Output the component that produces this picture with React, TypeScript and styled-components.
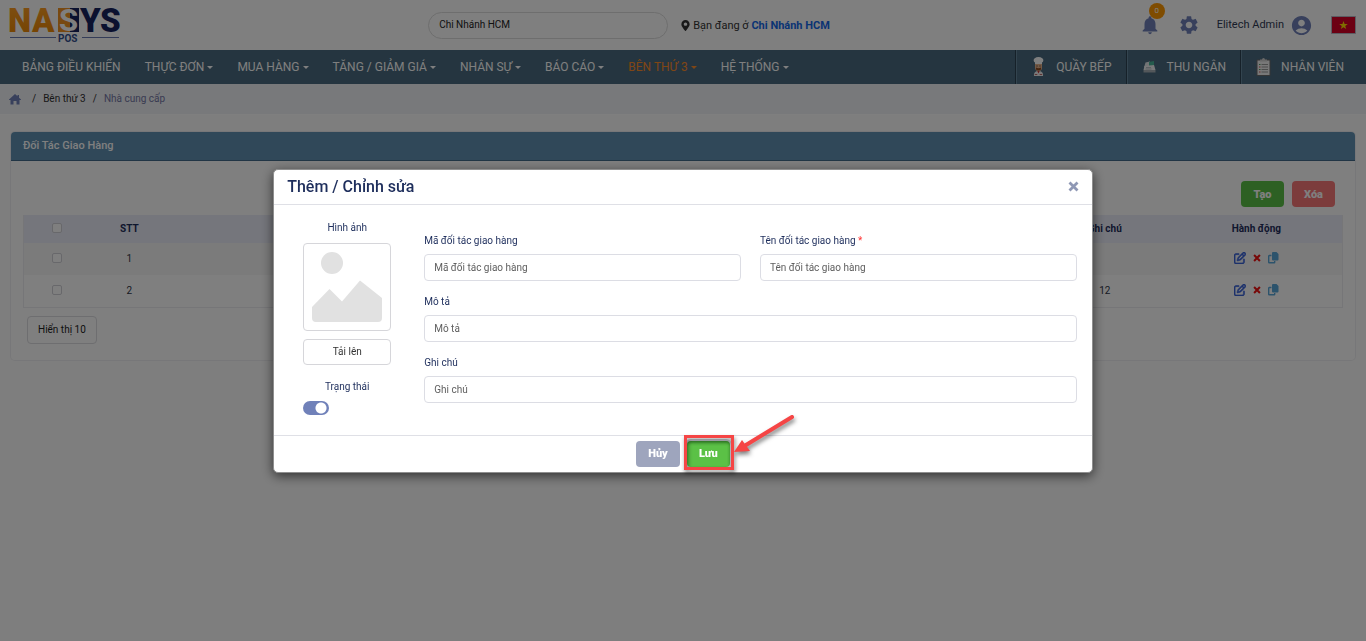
import React from 'react';
import styled, { createGlobalStyle } from 'styled-components';
import { MdNotifications, MdSettings, MdAccountCircle } from 'react-icons/md';
import { FaMapMarkerAlt } from 'react-icons/fa';
import { FaRegPenToSquare } from 'react-icons/fa6';

const GlobalStyle = createGlobalStyle`
  *, *::before, *::after { box-sizing: border-box; }
  html { height: 100%; }
  body {
    margin: 0;
    min-height: 100%;
    background: #fcfcfc;
    color: #1e2e5c;
    font: 400 10px/16px Roboto, "Noto Sans", sans-serif;
  }
  button, input, select { font: inherit; color: inherit; margin: 0; }
  a { color: inherit; text-decoration: none; }
  svg { display: block; flex: none; }
`;

/* ---------- top bar ---------- */
const TopBar = styled.header`
  display: grid;
  grid-template-columns: 31% 1fr auto;
  align-items: center;
  height: 50px;
  padding: 0 10px 0 7px;
  background: #fff;
`;
const BranchArea = styled.div`
  display: flex;
  align-items: center;
  gap: 12px;
  padding-left: 3px;
`;
const BranchSelect = styled.select`
  appearance: none;
  width: 240px;
  height: 27px;
  padding: 0 10px;
  border: 1px solid #dcdcdc;
  border-radius: 14px;
  background: #fff;
  color: #222;
`;
const Location = styled.p`
  display: flex;
  align-items: center;
  gap: 2px;
  margin: 0;
  padding-top: 1px;
  font-size: 11px;
  color: #333;
`;
const BranchLink = styled.a`
  font-weight: 700;
  color: #1468e8;
`;
const UserArea = styled.div`
  display: flex;
  align-items: center;
  color: #7081b9;
`;
const IconButton = styled.button`
  position: relative;
  display: flex;
  padding: 0;
  border: 0;
  background: none;
  margin-right: 17px;
`;
const Badge = styled.span`
  position: absolute;
  top: -11px;
  right: -4px;
  width: 16px;
  height: 16px;
  border-radius: 8px;
  background: #ff9800;
  color: #fff;
  font-size: 8px;
  text-align: center;
`;
const Account = styled.button`
  display: flex;
  align-items: center;
  gap: 6px;
  padding: 0;
  border: 0;
  background: none;
  font-size: 11px;
  color: #7081b9;
  margin-right: 18px;
`;
const AccountName = styled.span`
  color: #303a55;
`;

/* ---------- navigation ---------- */
const NavBar = styled.nav`
  display: flex;
  justify-content: space-between;
  height: 34px;
  padding-left: 10px;
  background: #4a6b80;
  color: #fff;
  font-size: 12px;
`;
const NavGroup = styled.div`
  display: flex;
`;
const NavItem = styled.a<{ $active?: boolean }>`
  display: flex;
  align-items: center;
  gap: 3px;
  padding: 0 12px;
  white-space: nowrap;
  color: ${(p) => (p.$active ? '#ff8c2a' : '#fff')};
`;
const Caret = styled.span`
  border: 3px solid transparent;
  border-top-color: currentColor;
  border-bottom: 0;
`;
const StationLink = styled.a`
  display: flex;
  align-items: center;
  gap: 10px;
  padding: 0 14px 0 15px;
  border-left: 1px solid #2d4352;
  box-shadow: inset 1px 0 #66899f;
  white-space: nowrap;
  &:last-child { padding-right: 22px; }
`;

/* ---------- breadcrumb ---------- */
const Crumbs = styled.nav`
  display: flex;
  align-items: center;
  gap: 7px;
  height: 31px;
  padding: 0 9px;
  background: #f1f2f6;
  border-bottom: 1px solid #fff;
  color: #303030;
`;
const HomeLink = styled.a`
  margin-right: 4px;
  color: #7081b9;
`;
const CrumbCurrent = styled.span`
  color: #7377a5;
`;

/* ---------- card ---------- */
const Card = styled.section`
  margin: 17px 11px 0;
  border-radius: 4px;
  background: #fff;
  box-shadow: 0 0 0 1px #efeff2;
`;
const CardTitle = styled.h1`
  margin: 0;
  height: 29px;
  padding: 0 12px;
  background: #6090b2;
  border-bottom: 1px solid #426b8a;
  border-radius: 4px 4px 0 0;
  color: #fff;
  font-size: 11px;
  line-height: 28px;
  font-weight: 500;
`;
const CardBody = styled.div`
  padding: 20px 12px 16px;
`;
const Toolbar = styled.div`
  display: flex;
  justify-content: flex-end;
  gap: 8px;
  padding: 0 8px 8px 0;
`;
const Button = styled.button<{ $tone: string; $pressed?: boolean }>`
  min-width: 43px;
  height: 26px;
  padding: 1px 12px 0;
  border: 0;
  border-radius: 4px;
  background: ${(p) => p.$tone};
  color: #fff;
  font-size: 11px;
  font-weight: 900;
  box-shadow: ${(p) => (p.$pressed ? 'inset 0 2px 3px rgba(0, 60, 0, 0.35), 0 0 0 2px #c9cbd3' : 'none')};
`;
const Table = styled.table`
  width: 100%;
  border-collapse: separate;
  border-spacing: 0;
  table-layout: fixed;
  border: 1px solid #ececf0;
  border-top: 0;
  text-align: center;
  color: #303648;
`;
const HeadCell = styled.th<{ $w?: string }>`
  width: ${(p) => p.$w || 'auto'};
  height: 28px;
  padding: 0;
  background: #ebedf8;
  color: #1e2e5c;
  font-weight: 700;
`;
const Row = styled.tr`
  &:nth-child(odd) { background: #f7f7f7; }
`;
const Cell = styled.td`
  height: 32px;
  padding: 0;
`;
const Check = styled.input`
  appearance: none;
  display: block;
  width: 10px;
  height: 10px;
  margin: 0 auto 2px;
  border: 1px solid #d0d0d6;
  border-radius: 2px;
  background: #fff;
`;
const Actions = styled.div`
  display: flex;
  justify-content: center;
  align-items: center;
  gap: 7px;
  padding-bottom: 2px;
`;
const ActionButton = styled.button<{ $tone: string }>`
  display: flex;
  padding: 0;
  border: 0;
  background: none;
  color: ${(p) => p.$tone};
`;
const PageSize = styled.button`
  height: 28px;
  margin: 8px 0 0 4px;
  padding: 0 10px;
  border: 1px solid #dcdce0;
  border-radius: 4px;
  background: #fff;
  color: #222;
`;

/* ---------- modal ---------- */
const Backdrop = styled.div`
  position: fixed;
  inset: 0;
  display: flex;
  align-items: center;
  justify-content: center;
  background: rgba(0, 0, 0, 0.5);
`;
const Modal = styled.div`
  width: 60%;
  min-width: 560px;
  border: 1px solid #8f8f8f;
  border-radius: 5px;
  background: #fff;
  box-shadow: 0 3px 12px rgba(0, 0, 0, 0.6);
`;
const ModalHead = styled.div`
  display: flex;
  align-items: center;
  justify-content: space-between;
  height: 35px;
  padding: 0 13px;
  border-bottom: 1px solid #dfe0e6;
`;
const ModalTitle = styled.h2`
  margin: 0;
  font-size: 16px;
  line-height: 20px;
  font-weight: 500;
`;
const CloseButton = styled.button`
  display: flex;
  padding: 0;
  border: 0;
  background: none;
  color: #8f98b5;
`;
const ModalBody = styled.div`
  display: flex;
  gap: 33px;
  padding: 15px 15px 20px 29px;
`;
const MediaColumn = styled.div`
  display: flex;
  flex-direction: column;
  width: 88px;
`;
const MediaLabel = styled.label`
  text-align: center;
`;
const Preview = styled.div`
  display: flex;
  align-items: center;
  justify-content: center;
  height: 88px;
  margin: 7px 0 8px;
  border: 1px solid #d6d6da;
  border-radius: 4px;
`;
const UploadButton = styled.button`
  height: 26px;
  margin-bottom: 14px;
  border: 1px solid #d6d6da;
  border-radius: 4px;
  background: #fff;
  color: #333;
`;
const Switch = styled.input`
  appearance: none;
  width: 26px;
  height: 14px;
  margin-top: 6px;
  border-radius: 7px;
  background: radial-gradient(circle at 18px 7px, #fff 5px, #7081b9 6px);
`;
const Fields = styled.div`
  flex: 1;
  display: grid;
  grid-template-columns: 1fr 1fr;
  align-content: start;
  gap: 16px 19px;
  padding-top: 16px;
`;
const Field = styled.div<{ $wide?: boolean }>`
  display: flex;
  flex-direction: column;
  gap: 8px;
  grid-column: ${(p) => (p.$wide ? '1 / -1' : 'auto')};
`;
const FieldLabel = styled.label`
  line-height: 10px;
`;
const Required = styled.span`
  color: #f33;
`;
const TextInput = styled.input`
  width: 100%;
  height: 27px;
  padding: 0 9px;
  border: 1px solid #dcdde4;
  border-radius: 4px;
  background: #fff;
  &::placeholder { color: #606060; opacity: 1; }
`;
const ModalFoot = styled.div`
  display: flex;
  justify-content: center;
  gap: 7px;
  height: 37px;
  padding-top: 5px;
  border-top: 1px solid #dfe0e6;
`;
const SaveSpot = styled.div`
  position: relative;
`;
const Callout = styled.svg`
  position: absolute;
  left: -5px;
  top: -28px;
  overflow: visible;
  pointer-events: none;
  filter: drop-shadow(1px 3px 2px rgba(0, 0, 0, 0.5));
`;

const Logo = () => (
  <svg width="116" height="50" viewBox="-3 -7 116 50" role="img" aria-label="NASYS POS">
    <defs>
      <linearGradient id="gold" x1="0" y1="0" x2="0" y2="1">
        <stop offset="0" stopColor="#ffa028" />
        <stop offset="1" stopColor="#e88400" />
      </linearGradient>
    </defs>
    <path d="M48 1h13v24H48z" fill="#f09322" />
    <path d="M60 1h9v24h-9z" fill="#16235e" />
    <g fontFamily="Roboto, sans-serif" fontWeight="900" fontSize="33">
      <text x="-2" y="25" fill="url(#gold)">N</text>
      <text x="22" y="25" fill="url(#gold)">A</text>
      <text x="49" y="24" fill="#fff" fontWeight="700" fontSize="31">S</text>
      <text x="70" y="25" fill="#16235e">Y</text>
      <text x="90" y="25" fill="#16235e">S</text>
    </g>
    <path d="M0 30.5h46M72 30.5h37" stroke="#6878b0" />
    <text x="48" y="35" fontFamily="Roboto, sans-serif" fontWeight="700" fontSize="10" fill="#34508f">POS</text>
  </svg>
);

const Flag = () => (
  <svg width="25" height="18" viewBox="0 0 25 18" role="img" aria-label="Việt Nam">
    <path d="M.5.5h24v17H.5z" fill="#d80027" stroke="#b9b9c4" />
    <path d="M12.500 5l1.100 3.100h3.200l-2.600 1.900 1 3.100-2.700-1.900-2.700 1.900 1-3.100-2.600-1.900h3.200z" fill="#ffda00" />
  </svg>
);

const HomeIcon = () => (
  <svg width="12" height="11" viewBox="0 0 12 11" fill="currentColor">
    <path d="M6 0L8.500 2.300V1H10v2.700L12 5.600V6h-1.500v4.500h-3V7h-3v3.500h-3V6H0v-.400z" />
  </svg>
);

const CrossIcon = ({ size }: { size: number }) => (
  <svg width={size} height={size} viewBox="0 0 11 11" stroke="currentColor" strokeWidth="2.800">
    <path d="M1.500 1.500l8 8M9.500 1.500l-8 8" />
  </svg>
);

const ChefIcon = () => (
  <svg width="15" height="20" viewBox="1 0 15 20">
    <path d="M4 19c-.5-3.500 1.500-5 4.500-5s5 1.500 4.500 5z" fill="#f2f2f2" />
    <path d="M7 13.500h3l-1.500 3z" fill="#c33" />
    <path d="M5 6h7v4.500a3.500 3.500 0 0 1-7 0z" fill="#e9b48c" />
    <path d="M6 10.500q2.500 1.500 5 0v2q-2.500 1.800-5 0z" fill="#8a4a20" />
    <path d="M7 8.500v1M10 8.500v1" stroke="#333" />
    <path d="M5 7V5.500A2.400 2.400 0 0 1 4.800 1.300 4.500 3 0 0 1 12.200 1.300 2.400 2.400 0 0 1 12 5.500V7z" fill="#fff" />
    <path d="M4.800 17.500h2.500M9.700 17.500h2.500" stroke="#b66" />
  </svg>
);

const CashierIcon = () => (
  <svg width="15" height="20" viewBox="0 0 15 20">
    <path d="M3.500 5.500L8 4.500l1 6H2z" fill="#e4e8ea" />
    <path d="M7 5l5-1v4.500l-5 .500z" fill="#49b79b" />
    <path d="M2.500 9L12 8l1.500 5H1.500z" fill="#f1f3f5" />
    <path d="M1.500 13h12v2.500h-12z" fill="#a9b0b6" />
    <path d="M4 10.500h5M3.500 12h6" stroke="#b9c0c6" />
  </svg>
);

const ClipboardIcon = () => (
  <svg width="15" height="20" viewBox="0 0 15 20">
    <path d="M1 3h13v15.500H1z" fill="#f1f1f1" stroke="#6d6d6d" />
    <path d="M4 4.500V2.500h2a1.500 1.500 0 0 1 3 0h2v2z" fill="#d0d0d0" />
    <path d="M5.500 7.500H12M5.500 10H12M5.500 12.500H12M5.500 15H12" stroke="#999" />
    <path d="M3 7.500h1.500M3 12.500h1.500" stroke="#4a9a5a" />
    <path d="M3 10h1.500M3 15h1.500" stroke="#c55" />
  </svg>
);

const CopyIcon = () => (
  <svg width="11" height="12" viewBox="0 0 11 12">
    <path d="M5 0h3.500L10.500 2v5.500a1 1 0 0 1-1 1H5a1 1 0 0 1-1-1V1a1 1 0 0 1 1-1z" fill="currentColor" />
    <path d="M3.500 3.500H1.200a.5.5 0 0 0-.5.5v6.300a.5.5 0 0 0 .5.5h5a.5.5 0 0 0 .5-.5V9" fill="none" stroke="currentColor" strokeWidth="1.400" />
  </svg>
);

const Placeholder = () => (
  <svg width="70" height="72" viewBox="0 0 70 72" fill="#e1e1e1">
    <circle cx="20" cy="12" r="11" />
    <path d="M0 56L17.500 38 30 50.500 48 29.500 70 47V67a4 4 0 0 1-4 4H4a4 4 0 0 1-4-4z" />
  </svg>
);

const menus = [
  { label: 'THỰC ĐƠN' },
  { label: 'MUA HÀNG' },
  { label: 'TĂNG / GIẢM GIÁ' },
  { label: 'NHÂN SỰ' },
  { label: 'BÁO CÁO' },
  { label: 'BÊN THỨ 3', active: true },
  { label: 'HỆ THỐNG' },
];

const partners = [
  { id: 1, note: '' },
  { id: 2, note: '12' },
];

export default function App() {
  return (
    <>
      <GlobalStyle />
      <TopBar>
        <a href="#home"><Logo /></a>
        <BranchArea>
          <BranchSelect aria-label="Chi nhánh">
            <option>Chi Nhánh HCM</option>
          </BranchSelect>
          <Location>
            <FaMapMarkerAlt size={11} />
            <span>Bạn đang ở <BranchLink href="#branch">Chi Nhánh HCM</BranchLink></span>
          </Location>
        </BranchArea>
        <UserArea>
          <IconButton aria-label="Thông báo">
            <MdNotifications size={22} />
            <Badge>0</Badge>
          </IconButton>
          <IconButton aria-label="Cài đặt"><MdSettings size={22} /></IconButton>
          <Account>
            <AccountName>Elitech Admin</AccountName>
            <MdAccountCircle size={23} />
          </Account>
          <Flag />
        </UserArea>
      </TopBar>

      <NavBar>
        <NavGroup>
          <NavItem href="#dashboard">BẢNG ĐIỀU KHIỂN</NavItem>
          {menus.map((m) => (
            <NavItem key={m.label} href="#menu" $active={m.active}>{m.label}<Caret /></NavItem>
          ))}
        </NavGroup>
        <NavGroup>
          <StationLink href="#kitchen"><ChefIcon />QUẦY BẾP</StationLink>
          <StationLink href="#cashier"><CashierIcon />THU NGÂN</StationLink>
          <StationLink href="#staff"><ClipboardIcon />NHÂN VIÊN</StationLink>
        </NavGroup>
      </NavBar>

      <Crumbs aria-label="Breadcrumb">
        <HomeLink href="#home" aria-label="Trang chủ"><HomeIcon /></HomeLink>
        <span>/</span>
        <a href="#third">Bên thứ 3</a>
        <span>/</span>
        <CrumbCurrent>Nhà cung cấp</CrumbCurrent>
      </Crumbs>

      <main>
        <Card>
          <CardTitle>Đối Tác Giao Hàng</CardTitle>
          <CardBody>
            <Toolbar>
              <Button $tone="#5bc146">Tạo</Button>
              <Button $tone="#f87878">Xóa</Button>
            </Toolbar>
            <Table>
              <thead>
                <tr>
                  <HeadCell $w="5%"><Check type="checkbox" aria-label="Chọn tất cả" /></HeadCell>
                  <HeadCell $w="6%">STT</HeadCell>
                  <HeadCell />
                  <HeadCell $w="10%">Ghi chú</HeadCell>
                  <HeadCell $w="13%">Hành động</HeadCell>
                </tr>
              </thead>
              <tbody>
                {partners.map((p) => (
                  <Row key={p.id}>
                    <Cell><Check type="checkbox" aria-label={`Chọn ${p.id}`} /></Cell>
                    <Cell>{p.id}</Cell>
                    <Cell />
                    <Cell>{p.note}</Cell>
                    <Cell>
                      <Actions>
                        <ActionButton $tone="#3a63d8" aria-label="Sửa">
                          <FaRegPenToSquare size={12} stroke="currentColor" strokeWidth={24} />
                        </ActionButton>
                        <ActionButton $tone="#f01010" aria-label="Xóa"><CrossIcon size={8} /></ActionButton>
                        <ActionButton $tone="#58a6d8" aria-label="Sao chép"><CopyIcon /></ActionButton>
                      </Actions>
                    </Cell>
                  </Row>
                ))}
              </tbody>
            </Table>
            <PageSize>Hiển thị 10</PageSize>
          </CardBody>
        </Card>
      </main>

      <Backdrop>
        <Modal role="dialog" aria-modal="true" aria-labelledby="modal-title">
          <ModalHead>
            <ModalTitle id="modal-title">Thêm / Chỉnh sửa</ModalTitle>
            <CloseButton aria-label="Đóng"><CrossIcon size={11} /></CloseButton>
          </ModalHead>
          <ModalBody>
            <MediaColumn>
              <MediaLabel htmlFor="upload">Hình ảnh</MediaLabel>
              <Preview><Placeholder /></Preview>
              <UploadButton id="upload" type="button">Tải lên</UploadButton>
              <MediaLabel htmlFor="status">Trạng thái</MediaLabel>
              <Switch id="status" type="checkbox" role="switch" defaultChecked />
            </MediaColumn>
            <Fields>
              <Field>
                <FieldLabel htmlFor="code">Mã đối tác giao hàng</FieldLabel>
                <TextInput id="code" placeholder="Mã đối tác giao hàng" />
              </Field>
              <Field>
                <FieldLabel htmlFor="name">Tên đối tác giao hàng <Required>*</Required></FieldLabel>
                <TextInput id="name" placeholder="Tên đối tác giao hàng" />
              </Field>
              <Field $wide>
                <FieldLabel htmlFor="desc">Mô tả</FieldLabel>
                <TextInput id="desc" placeholder="Mô tả" />
              </Field>
              <Field $wide>
                <FieldLabel htmlFor="note">Ghi chú</FieldLabel>
                <TextInput id="note" placeholder="Ghi chú" />
              </Field>
            </Fields>
          </ModalBody>
          <ModalFoot>
            <Button $tone="#9ea5bd">Hủy</Button>
            <SaveSpot>
              <Button $tone="#5bc146" $pressed>Lưu</Button>
              <Callout width="116" height="58" viewBox="0 0 116 58" aria-hidden="true">
                <path d="M3.500 23.500h47v32h-47z" fill="none" stroke="#f54545" strokeWidth="3" />
                <path d="M110 4L64 32" stroke="#f54545" strokeWidth="4" strokeLinecap="round" />
                <path d="M52 39l8-12 8 11z" fill="#f54545" />
              </Callout>
            </SaveSpot>
          </ModalFoot>
        </Modal>
      </Backdrop>
    </>
  );
}
